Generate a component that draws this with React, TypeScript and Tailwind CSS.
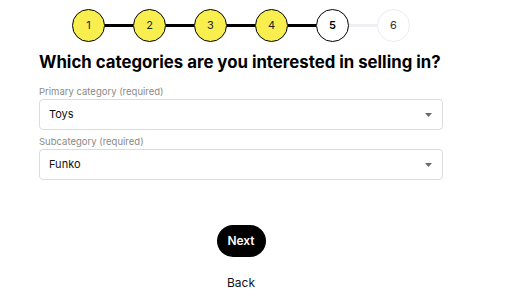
import React from "react";

const Step = ({ n, state }: { n: number; state: "done" | "current" | "todo" }) => {
  const cls =
    state === "done"
      ? "bg-[#f8ef4f] border-black text-[#222]"
      : state === "current"
      ? "bg-white border-black text-black font-semibold"
      : "bg-white border-[#ececec] text-[#333]";
  return (
    <div
      className={`w-[33px] h-[33px] rounded-full border-[1.5px] flex items-center justify-center text-[11px] shrink-0 ${cls}`}
    >
      {n}
    </div>
  );
};

const Line = ({ dark }: { dark: boolean }) => (
  <div className={`flex-1 h-[3px] ${dark ? "bg-black" : "bg-[#eeeff3]"}`} />
);

const Select = ({ label, value }: { label: string; value: string }) => (
  <div className="flex flex-col">
    <div className="text-[9.5px] text-[#8a8a8a] leading-[12px] mb-[1px]">{label}</div>
    <div className="h-[31px] rounded-[4px] border border-[#dcdcdc] flex items-center justify-between pl-[9px] pr-[10px]">
      <span className="text-[11px] text-[#111]">{value}</span>
      <svg width="7" height="4" viewBox="0 0 7 4">
        <path d="M0 0 L7 0 L3.5 4 Z" fill="#6b6b6b" />
      </svg>
    </div>
  </div>
);

export default function App() {
  return (
    <div
      className="w-[512px] h-[304px] bg-white overflow-hidden"
      style={{ fontFamily: "Inter, 'Liberation Sans', sans-serif" }}
    >
      <div className="ml-[39px] w-[404px] flex flex-col">
        <div className="flex items-center px-[33px] mt-[9px]">
          <Step n={1} state="done" />
          <Line dark />
          <Step n={2} state="done" />
          <Line dark />
          <Step n={3} state="done" />
          <Line dark />
          <Step n={4} state="done" />
          <Line dark />
          <Step n={5} state="current" />
          <Line dark={false} />
          <Step n={6} state="todo" />
        </div>
        <h1
          className="mt-[9px] text-[16.8px] font-bold leading-[22px] text-black whitespace-nowrap"
          style={{ fontFamily: "Inter, 'Liberation Sans', sans-serif" }}
        >
          Which categories are you interested in selling in?
        </h1>
        <div className="mt-[13px] flex flex-col gap-[6px]">
          <Select label="Primary category (required)" value="Toys" />
          <Select label="Subcategory (required)" value="Funko" />
        </div>
        <div className="flex flex-col items-center mt-[45px]">
          <button className="h-[32px] w-[49px] rounded-full bg-black text-white text-[12px] font-semibold">
            Next
          </button>
          <div className="mt-[17px] text-[12px] text-[#111]">Back</div>
        </div>
      </div>
    </div>
  );
}
